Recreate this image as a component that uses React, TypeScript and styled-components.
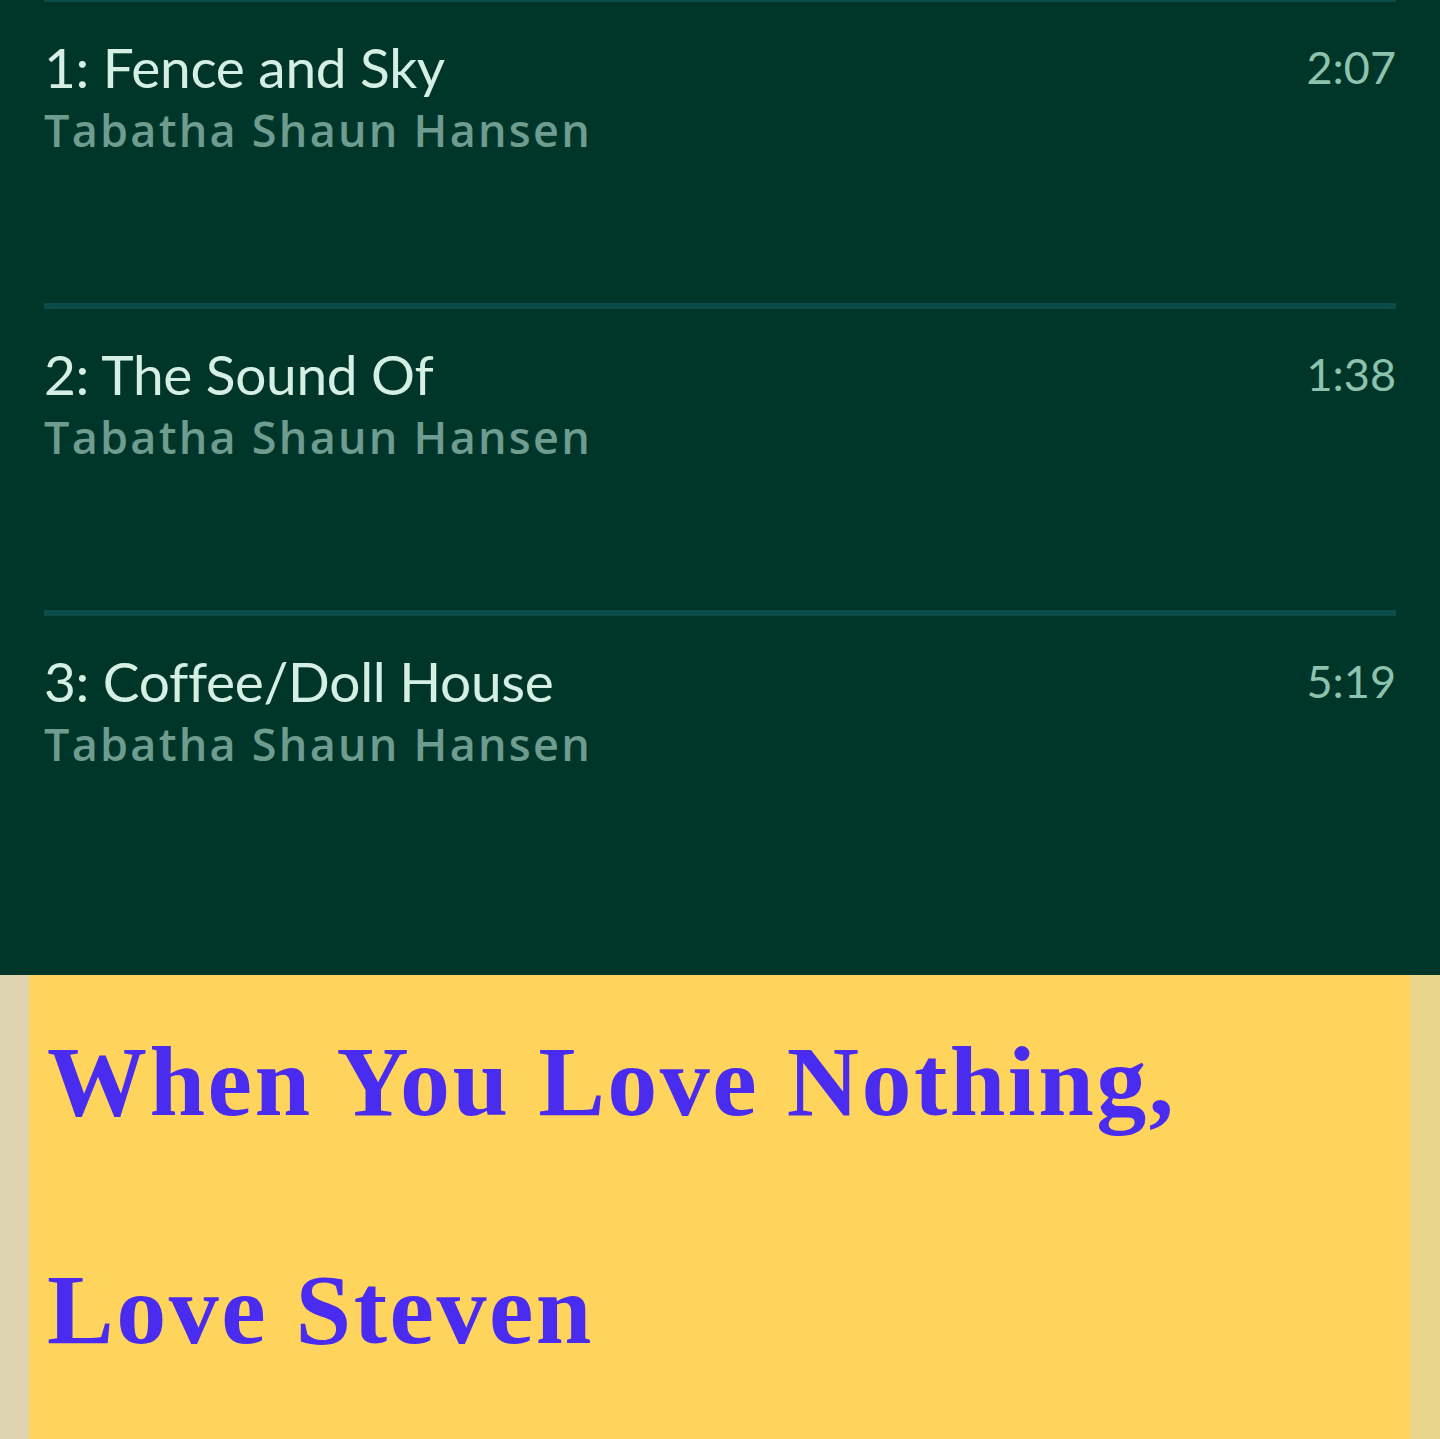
import styled, { createGlobalStyle } from "styled-components";

const GlobalStyle = createGlobalStyle`
  html, body {
    margin: 0;
    padding: 0;
    background: #00362a;
  }
  * {
    box-sizing: border-box;
  }
`;

type Track = { title: string; artist: string; length: string };

const tracks: Track[] = [
  { title: "Fence and Sky", artist: "Tabatha Shaun Hansen", length: "2:07" },
  { title: "The Sound Of", artist: "Tabatha Shaun Hansen", length: "1:38" },
  { title: "Coffee/Doll House", artist: "Tabatha Shaun Hansen", length: "5:19" },
];

export default function App() {
  return (
    <>
      <GlobalStyle />
      <Page>
        <TrackList>
          {tracks.map((t, i) => (
            <TrackRow key={t.title}>
              <TrackInfo>
                <TrackTitle>
                  {i + 1}: {t.title}
                </TrackTitle>
                <TrackArtist>{t.artist}</TrackArtist>
              </TrackInfo>
              <TrackLength>{t.length}</TrackLength>
            </TrackRow>
          ))}
        </TrackList>
        <Note>
          <NoteHeading>
            When You Love Nothing,
            <br />
            Love Steven
          </NoteHeading>
        </Note>
      </Page>
    </>
  );
}

const Page = styled.div`
  width: 1440px;
  min-height: 1439px;
  background: #00362a;
  display: flex;
  flex-direction: column;
  overflow: hidden;
`;

const TrackList = styled.ul`
  list-style: none;
  margin: -4px 0 0;
  padding: 0 44px 58px;
`;

const TrackRow = styled.li`
  display: flex;
  justify-content: space-between;
  align-items: flex-start;
  height: 307px;
  padding-top: 33px;
  border-top: 6px solid #0b4b48;
`;

const TrackInfo = styled.div`
  display: flex;
  flex-direction: column;
`;

const TrackTitle = styled.span`
  font-family: Lato, "Liberation Sans", sans-serif;
  font-weight: 400;
  font-size: 55px;
  line-height: 64px;
  letter-spacing: -0.3px;
  color: #d5efe5;
`;

const TrackArtist = styled.span`
  font-family: "Open Sans", "Liberation Sans", sans-serif;
  font-weight: 600;
  font-size: 45px;
  line-height: 56px;
  letter-spacing: 2.25px;
  color: #6e9d90;
  margin-top: 3px;
`;

const TrackLength = styled.span`
  font-family: Lato, "Liberation Sans", sans-serif;
  font-weight: 400;
  font-size: 45px;
  line-height: 54px;
  color: #8dc3ae;
  margin-top: 5px;
`;

const Note = styled.section`
  flex: 1;
  background: #ffd45c;
  border-left: 29px solid #ddd3b0;
  border-right: 30px solid #e9d68b;
  padding: 0 18px;
`;

const NoteHeading = styled.h1`
  margin: -7px 0 0;
  font-family: "Liberation Serif", "Times New Roman", serif;
  font-weight: 700;
  font-size: 100px;
  line-height: 228px;
  letter-spacing: 2.5px;
  color: #4a2cf0;
`;
